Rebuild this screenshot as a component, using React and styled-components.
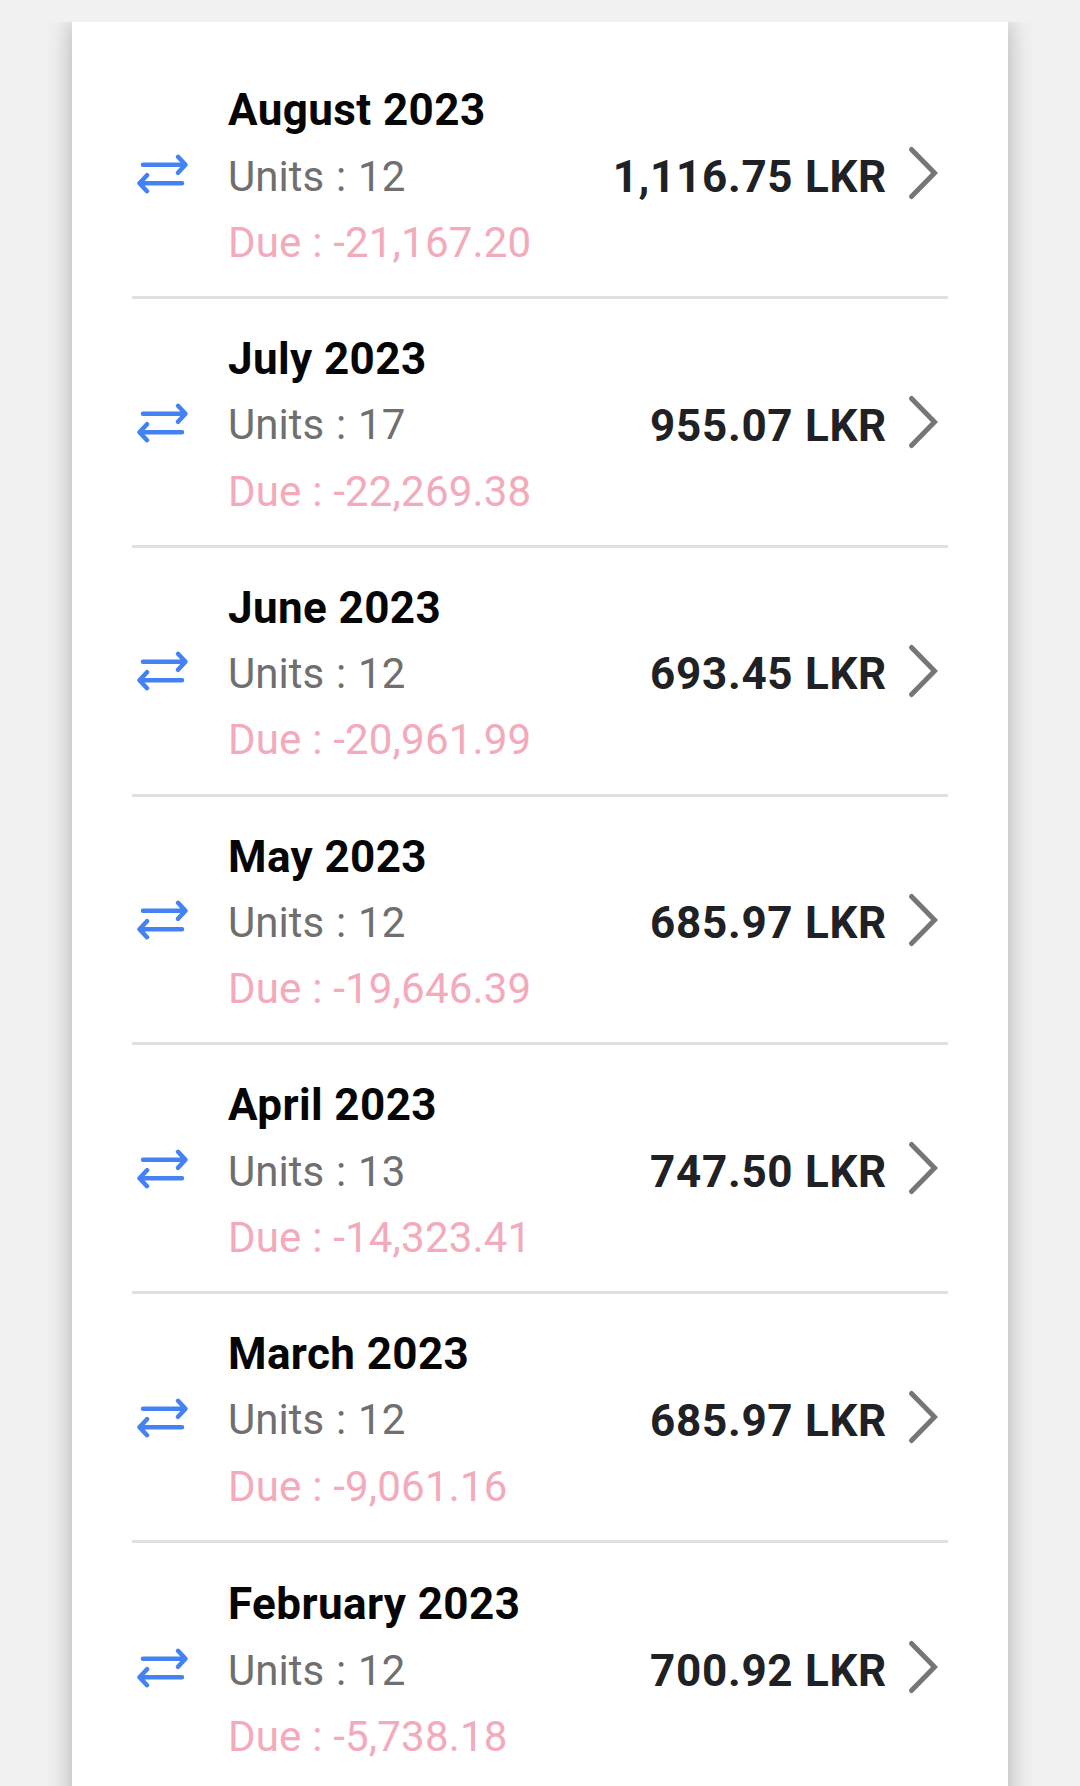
import React from "react";
import styled, { createGlobalStyle } from "styled-components";

const Global = createGlobalStyle`
  html, body { margin: 0; padding: 0; background: #f1f1f1; }
  body { font-family: Roboto, "Liberation Sans", sans-serif; }
`;

const Page = styled.div`
  width: 1080px;
  height: 1786px;
  overflow: hidden;
  background: #f1f1f1;
`;

const TopBar = styled.div`
  position: relative;
  z-index: 1;
  height: 21.5px;
  background: #f1f1f1;
`;

const Card = styled.div`
  width: 936px;
  margin-left: 72px;
  height: 1800px;
  background: #fff;
  padding: 28.9px 60px 0 60px;
  box-sizing: border-box;
  box-shadow: 0 0 24px rgba(0, 0, 0, 0.28);
`;

const Row = styled.div`
  display: flex;
  align-items: center;
  height: 248.76px;
  box-sizing: border-box;
  padding: 25px 0 18px;
  border-bottom: ${(p) => (p.$last ? "none" : "3px solid #e0e0e0")};
`;

const SwapIcon = styled.svg`
  flex: none;
  width: 52px;
  height: 42px;
  margin-left: 5px;
  margin-bottom: 6px;
  color: #4482f4;
`;

const Info = styled.div`
  flex: 1;
  margin-left: 39px;
  font-size: 42px;
  line-height: 66.33px;
`;

const Title = styled.div`
  font-size: 44px;
  font-weight: 700;
  letter-spacing: 0.4px;
  color: #060606;
`;

const Units = styled.div`
  color: #6f6f6f;
  word-spacing: 1.5px;
`;

const Due = styled.div`
  color: #f3aabb;
  letter-spacing: 0.2px;
`;

const Amount = styled.div`
  font-size: 44px;
  font-weight: 700;
  color: #202124;
  white-space: nowrap;
  letter-spacing: 0.7px;
`;

const Chevron = styled.svg`
  flex: none;
  width: 34px;
  height: 56px;
  margin-left: 19px;
  margin-right: 8px;
  margin-bottom: 7px;
  color: #767676;
`;

const rows = [
  ["August 2023", 12, "-21,167.20", "1,116.75"],
  ["July 2023", 17, "-22,269.38", "955.07"],
  ["June 2023", 12, "-20,961.99", "693.45"],
  ["May 2023", 12, "-19,646.39", "685.97"],
  ["April 2023", 13, "-14,323.41", "747.50"],
  ["March 2023", 12, "-9,061.16", "685.97"],
  ["February 2023", 12, "-5,738.18", "700.92"],
];

export default function App() {
  return (
    <>
      <Global />
      <Page>
        <TopBar />
        <Card>
          {rows.map(([title, units, due, amount], i) => (
            <Row key={title} $last={i === rows.length - 1}>
              <SwapIcon viewBox="0 0 52 42" fill="none" stroke="currentColor" strokeWidth="4.5" strokeLinecap="round" strokeLinejoin="round">
                <path d="M6 11.800H48M41 3.800L48.500 11.800L41 19.800" />
                <path d="M45 30.200H3M10 22.200L2.500 30.200L10 38.200" />
              </SwapIcon>
              <Info>
                <Title>{title}</Title>
                <Units>Units : {units}</Units>
                <Due>Due : {due}</Due>
              </Info>
              <Amount>{amount} LKR</Amount>
              <Chevron viewBox="0 0 34 56" fill="none" stroke="currentColor" strokeWidth="5" strokeLinecap="round" strokeLinejoin="miter">
                <path d="M5.500 4.500L28.500 28L5.500 51.500" />
              </Chevron>
            </Row>
          ))}
        </Card>
      </Page>
    </>
  );
}
